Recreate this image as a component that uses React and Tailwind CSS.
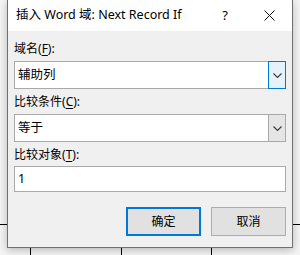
import React from 'react';

const Chevron = () => (
  <svg width="9" height="5" viewBox="0 0 9 5" fill="none">
    <path d="M0.5 0.5 L4.5 4.5 L8.5 0.5" stroke="#3a3a3a" strokeWidth="1.1" />
  </svg>
);

const Label = ({ text, hotkey, className = '' }) => (
  <div className={`h-[16px] leading-[16px] text-[12px] text-black ${className}`}>
    {text}(<span className="underline underline-offset-2">{hotkey}</span>):
  </div>
);

export default function App() {
  return (
    <div className="relative w-[300px] h-[255px] overflow-hidden bg-[#f4f4f4] font-['Noto_Sans','Noto_Sans_CJK_SC',sans-serif]">
      {/* table lines of the document behind the dialog */}
      <div className="absolute left-0 right-0 top-[224px] h-[1px] bg-black" />
      <div className="absolute left-[30px] top-[224px] bottom-0 w-[1px] bg-black" />
      <div className="absolute left-[121px] top-[224px] bottom-0 w-[1px] bg-black" />
      <div className="absolute left-[211px] top-[224px] bottom-0 w-[1px] bg-black" />

      <div className="relative ml-[7px] w-[286px] h-[248px] flex flex-col border border-t-0 border-[#707070] bg-[#f0f0f0] shadow-[0_2px_8px_rgba(0,0,0,0.25)]">
        {/* title bar */}
        <div className="h-[31px] flex items-center bg-white text-[12.5px] text-black">
          <div className="flex-1 pl-[8px] whitespace-nowrap">插入 Word 域: Next Record If</div>
          <div className="w-[46px] h-full flex items-center justify-center text-[13px] pl-[2px]">?</div>
          <div className="w-[45px] h-full flex items-center justify-center">
            <svg width="11" height="11" viewBox="0 0 11 11">
              <path d="M0.5 0.5 L10.5 10.5 M10.5 0.5 L0.5 10.5" stroke="#111" strokeWidth="1" />
            </svg>
          </div>
        </div>

        {/* body */}
        <div className="flex-1 flex flex-col px-[6px] pt-[10px]">
          <Label text="域名" hotkey="F" />
          <div className="mt-[4px] h-[28px] flex bg-white border border-[#a9a9a9]">
            <div className="flex-1 flex items-center pl-[3px] text-[12.5px] text-black">辅助列</div>
            <div className="w-[18px] -my-[1px] -mr-[1px] flex items-center justify-center bg-[#e5f1fb] border border-[#0078d7]">
              <Chevron />
            </div>
          </div>

          <Label text="比较条件" hotkey="C" className="mt-[5px]" />
          <div className="mt-[4px] h-[28px] flex bg-white border border-[#a9a9a9]">
            <div className="flex-1 flex items-center pl-[3px] text-[12.5px] text-black">等于</div>
            <div className="w-[17px] flex items-center justify-center bg-[#e5e5e5] border-l border-[#a9a9a9]">
              <Chevron />
            </div>
          </div>

          <Label text="比较对象" hotkey="T" className="mt-[5px]" />
          <div className="mt-[3px] h-[26px] flex items-center pl-[3px] bg-white border border-[#a9a9a9] text-[12.5px] text-black">
            1
          </div>

          <div className="mt-[15px] flex justify-end gap-[10px]">
            <button className="w-[75px] h-[29px] flex items-center justify-center bg-[#e1e1e1] border-2 border-[#0078d7] text-[12px] text-black">
              确定
            </button>
            <button className="w-[75px] h-[29px] flex items-center justify-center bg-[#e1e1e1] border border-[#adadad] text-[12px] text-black">
              取消
            </button>
          </div>
        </div>
      </div>
    </div>
  );
}
